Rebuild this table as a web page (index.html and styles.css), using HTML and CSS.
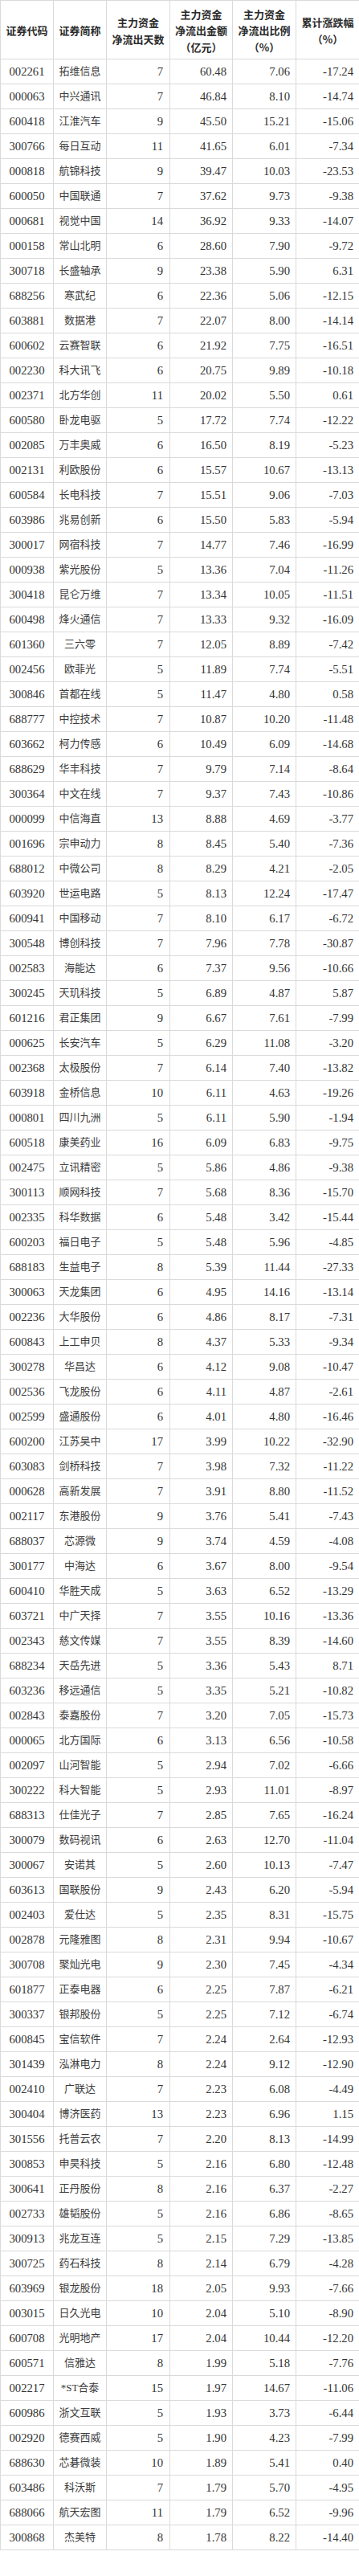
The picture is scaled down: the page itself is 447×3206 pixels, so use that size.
FILE: index.html
```html
<!DOCTYPE html>
<html lang="zh-CN">
<head>
<meta charset="utf-8">
<title>主力资金净流出</title>
<link rel="stylesheet" href="styles.css">
</head>
<body>
<table class="tbl">
<colgroup>
<col class="c1"><col class="c2"><col class="c3"><col class="c4"><col class="c5"><col class="c6">
</colgroup>
<thead>
<tr>
<th>证券代码</th>
<th>证券简称</th>
<th>主力资金<br>净流出天数</th>
<th>主力资金<br>净流出金额<br>（亿元）</th>
<th>主力资金<br>净流出比例<br>（%）</th>
<th>累计涨跌幅<br>（%）</th>
</tr>
</thead>
<tbody>
<tr><td class="code">002261</td><td class="name">拓维信息</td><td class="num n3">7</td><td class="num">60.48</td><td class="num">7.06</td><td class="num">-17.24</td></tr>
<tr><td class="code">000063</td><td class="name">中兴通讯</td><td class="num n3">7</td><td class="num">46.84</td><td class="num">8.10</td><td class="num">-14.74</td></tr>
<tr><td class="code">600418</td><td class="name">江淮汽车</td><td class="num n3">9</td><td class="num">45.50</td><td class="num">15.21</td><td class="num">-15.06</td></tr>
<tr><td class="code">300766</td><td class="name">每日互动</td><td class="num n3">11</td><td class="num">41.65</td><td class="num">6.01</td><td class="num">-7.34</td></tr>
<tr><td class="code">000818</td><td class="name">航锦科技</td><td class="num n3">9</td><td class="num">39.47</td><td class="num">10.03</td><td class="num">-23.53</td></tr>
<tr><td class="code">600050</td><td class="name">中国联通</td><td class="num n3">7</td><td class="num">37.62</td><td class="num">9.73</td><td class="num">-9.38</td></tr>
<tr><td class="code">000681</td><td class="name">视觉中国</td><td class="num n3">14</td><td class="num">36.92</td><td class="num">9.33</td><td class="num">-14.07</td></tr>
<tr><td class="code">000158</td><td class="name">常山北明</td><td class="num n3">6</td><td class="num">28.60</td><td class="num">7.90</td><td class="num">-9.72</td></tr>
<tr><td class="code">300718</td><td class="name">长盛轴承</td><td class="num n3">9</td><td class="num">23.38</td><td class="num">5.90</td><td class="num">6.31</td></tr>
<tr><td class="code">688256</td><td class="name">寒武纪</td><td class="num n3">6</td><td class="num">22.36</td><td class="num">5.06</td><td class="num">-12.15</td></tr>
<tr><td class="code">603881</td><td class="name">数据港</td><td class="num n3">7</td><td class="num">22.07</td><td class="num">8.00</td><td class="num">-14.14</td></tr>
<tr><td class="code">600602</td><td class="name">云赛智联</td><td class="num n3">6</td><td class="num">21.92</td><td class="num">7.75</td><td class="num">-16.51</td></tr>
<tr><td class="code">002230</td><td class="name">科大讯飞</td><td class="num n3">6</td><td class="num">20.75</td><td class="num">9.89</td><td class="num">-10.18</td></tr>
<tr><td class="code">002371</td><td class="name">北方华创</td><td class="num n3">11</td><td class="num">20.02</td><td class="num">5.50</td><td class="num">0.61</td></tr>
<tr><td class="code">600580</td><td class="name">卧龙电驱</td><td class="num n3">5</td><td class="num">17.72</td><td class="num">7.74</td><td class="num">-12.22</td></tr>
<tr><td class="code">002085</td><td class="name">万丰奥威</td><td class="num n3">6</td><td class="num">16.50</td><td class="num">8.19</td><td class="num">-5.23</td></tr>
<tr><td class="code">002131</td><td class="name">利欧股份</td><td class="num n3">6</td><td class="num">15.57</td><td class="num">10.67</td><td class="num">-13.13</td></tr>
<tr><td class="code">600584</td><td class="name">长电科技</td><td class="num n3">7</td><td class="num">15.51</td><td class="num">9.06</td><td class="num">-7.03</td></tr>
<tr><td class="code">603986</td><td class="name">兆易创新</td><td class="num n3">6</td><td class="num">15.50</td><td class="num">5.83</td><td class="num">-5.94</td></tr>
<tr><td class="code">300017</td><td class="name">网宿科技</td><td class="num n3">7</td><td class="num">14.77</td><td class="num">7.46</td><td class="num">-16.99</td></tr>
<tr><td class="code">000938</td><td class="name">紫光股份</td><td class="num n3">5</td><td class="num">13.36</td><td class="num">7.04</td><td class="num">-11.26</td></tr>
<tr><td class="code">300418</td><td class="name">昆仑万维</td><td class="num n3">7</td><td class="num">13.34</td><td class="num">10.05</td><td class="num">-11.51</td></tr>
<tr><td class="code">600498</td><td class="name">烽火通信</td><td class="num n3">7</td><td class="num">13.33</td><td class="num">9.32</td><td class="num">-16.09</td></tr>
<tr><td class="code">601360</td><td class="name">三六零</td><td class="num n3">7</td><td class="num">12.05</td><td class="num">8.89</td><td class="num">-7.42</td></tr>
<tr><td class="code">002456</td><td class="name">欧菲光</td><td class="num n3">5</td><td class="num">11.89</td><td class="num">7.74</td><td class="num">-5.51</td></tr>
<tr><td class="code">300846</td><td class="name">首都在线</td><td class="num n3">5</td><td class="num">11.47</td><td class="num">4.80</td><td class="num">0.58</td></tr>
<tr><td class="code">688777</td><td class="name">中控技术</td><td class="num n3">7</td><td class="num">10.87</td><td class="num">10.20</td><td class="num">-11.48</td></tr>
<tr><td class="code">603662</td><td class="name">柯力传感</td><td class="num n3">6</td><td class="num">10.49</td><td class="num">6.09</td><td class="num">-14.68</td></tr>
<tr><td class="code">688629</td><td class="name">华丰科技</td><td class="num n3">7</td><td class="num">9.79</td><td class="num">7.14</td><td class="num">-8.64</td></tr>
<tr><td class="code">300364</td><td class="name">中文在线</td><td class="num n3">7</td><td class="num">9.37</td><td class="num">7.43</td><td class="num">-10.86</td></tr>
<tr><td class="code">000099</td><td class="name">中信海直</td><td class="num n3">13</td><td class="num">8.88</td><td class="num">4.69</td><td class="num">-3.77</td></tr>
<tr><td class="code">001696</td><td class="name">宗申动力</td><td class="num n3">8</td><td class="num">8.45</td><td class="num">5.40</td><td class="num">-7.36</td></tr>
<tr><td class="code">688012</td><td class="name">中微公司</td><td class="num n3">8</td><td class="num">8.29</td><td class="num">4.21</td><td class="num">-2.05</td></tr>
<tr><td class="code">603920</td><td class="name">世运电路</td><td class="num n3">5</td><td class="num">8.13</td><td class="num">12.24</td><td class="num">-17.47</td></tr>
<tr><td class="code">600941</td><td class="name">中国移动</td><td class="num n3">7</td><td class="num">8.10</td><td class="num">6.17</td><td class="num">-6.72</td></tr>
<tr><td class="code">300548</td><td class="name">博创科技</td><td class="num n3">7</td><td class="num">7.96</td><td class="num">7.78</td><td class="num">-30.87</td></tr>
<tr><td class="code">002583</td><td class="name">海能达</td><td class="num n3">6</td><td class="num">7.37</td><td class="num">9.56</td><td class="num">-10.66</td></tr>
<tr><td class="code">300245</td><td class="name">天玑科技</td><td class="num n3">5</td><td class="num">6.89</td><td class="num">4.87</td><td class="num">5.87</td></tr>
<tr><td class="code">601216</td><td class="name">君正集团</td><td class="num n3">9</td><td class="num">6.67</td><td class="num">7.61</td><td class="num">-7.99</td></tr>
<tr><td class="code">000625</td><td class="name">长安汽车</td><td class="num n3">5</td><td class="num">6.29</td><td class="num">11.08</td><td class="num">-3.20</td></tr>
<tr><td class="code">002368</td><td class="name">太极股份</td><td class="num n3">7</td><td class="num">6.14</td><td class="num">7.40</td><td class="num">-13.82</td></tr>
<tr><td class="code">603918</td><td class="name">金桥信息</td><td class="num n3">10</td><td class="num">6.11</td><td class="num">4.63</td><td class="num">-19.26</td></tr>
<tr><td class="code">000801</td><td class="name">四川九洲</td><td class="num n3">5</td><td class="num">6.11</td><td class="num">5.90</td><td class="num">-1.94</td></tr>
<tr><td class="code">600518</td><td class="name">康美药业</td><td class="num n3">16</td><td class="num">6.09</td><td class="num">6.83</td><td class="num">-9.75</td></tr>
<tr><td class="code">002475</td><td class="name">立讯精密</td><td class="num n3">5</td><td class="num">5.86</td><td class="num">4.86</td><td class="num">-9.38</td></tr>
<tr><td class="code">300113</td><td class="name">顺网科技</td><td class="num n3">7</td><td class="num">5.68</td><td class="num">8.36</td><td class="num">-15.70</td></tr>
<tr><td class="code">002335</td><td class="name">科华数据</td><td class="num n3">6</td><td class="num">5.48</td><td class="num">3.42</td><td class="num">-15.44</td></tr>
<tr><td class="code">600203</td><td class="name">福日电子</td><td class="num n3">5</td><td class="num">5.48</td><td class="num">5.96</td><td class="num">-4.85</td></tr>
<tr><td class="code">688183</td><td class="name">生益电子</td><td class="num n3">8</td><td class="num">5.39</td><td class="num">11.44</td><td class="num">-27.33</td></tr>
<tr><td class="code">300063</td><td class="name">天龙集团</td><td class="num n3">6</td><td class="num">4.95</td><td class="num">14.16</td><td class="num">-13.14</td></tr>
<tr><td class="code">002236</td><td class="name">大华股份</td><td class="num n3">6</td><td class="num">4.86</td><td class="num">8.17</td><td class="num">-7.31</td></tr>
<tr><td class="code">600843</td><td class="name">上工申贝</td><td class="num n3">8</td><td class="num">4.37</td><td class="num">5.33</td><td class="num">-9.34</td></tr>
<tr><td class="code">300278</td><td class="name">华昌达</td><td class="num n3">6</td><td class="num">4.12</td><td class="num">9.08</td><td class="num">-10.47</td></tr>
<tr><td class="code">002536</td><td class="name">飞龙股份</td><td class="num n3">6</td><td class="num">4.11</td><td class="num">4.87</td><td class="num">-2.61</td></tr>
<tr><td class="code">002599</td><td class="name">盛通股份</td><td class="num n3">6</td><td class="num">4.01</td><td class="num">4.80</td><td class="num">-16.46</td></tr>
<tr><td class="code">600200</td><td class="name">江苏吴中</td><td class="num n3">17</td><td class="num">3.99</td><td class="num">10.22</td><td class="num">-32.90</td></tr>
<tr><td class="code">603083</td><td class="name">剑桥科技</td><td class="num n3">7</td><td class="num">3.98</td><td class="num">7.32</td><td class="num">-11.22</td></tr>
<tr><td class="code">000628</td><td class="name">高新发展</td><td class="num n3">7</td><td class="num">3.91</td><td class="num">8.80</td><td class="num">-11.52</td></tr>
<tr><td class="code">002117</td><td class="name">东港股份</td><td class="num n3">9</td><td class="num">3.76</td><td class="num">5.41</td><td class="num">-7.43</td></tr>
<tr><td class="code">688037</td><td class="name">芯源微</td><td class="num n3">9</td><td class="num">3.74</td><td class="num">4.59</td><td class="num">-4.08</td></tr>
<tr><td class="code">300177</td><td class="name">中海达</td><td class="num n3">6</td><td class="num">3.67</td><td class="num">8.00</td><td class="num">-9.54</td></tr>
<tr><td class="code">600410</td><td class="name">华胜天成</td><td class="num n3">5</td><td class="num">3.63</td><td class="num">6.52</td><td class="num">-13.29</td></tr>
<tr><td class="code">603721</td><td class="name">中广天择</td><td class="num n3">7</td><td class="num">3.55</td><td class="num">10.16</td><td class="num">-13.36</td></tr>
<tr><td class="code">002343</td><td class="name">慈文传媒</td><td class="num n3">7</td><td class="num">3.55</td><td class="num">8.39</td><td class="num">-14.60</td></tr>
<tr><td class="code">688234</td><td class="name">天岳先进</td><td class="num n3">5</td><td class="num">3.36</td><td class="num">5.43</td><td class="num">8.71</td></tr>
<tr><td class="code">603236</td><td class="name">移远通信</td><td class="num n3">5</td><td class="num">3.35</td><td class="num">5.21</td><td class="num">-10.82</td></tr>
<tr><td class="code">002843</td><td class="name">泰嘉股份</td><td class="num n3">7</td><td class="num">3.20</td><td class="num">7.05</td><td class="num">-15.73</td></tr>
<tr><td class="code">000065</td><td class="name">北方国际</td><td class="num n3">6</td><td class="num">3.13</td><td class="num">6.56</td><td class="num">-10.58</td></tr>
<tr><td class="code">002097</td><td class="name">山河智能</td><td class="num n3">5</td><td class="num">2.94</td><td class="num">7.02</td><td class="num">-6.66</td></tr>
<tr><td class="code">300222</td><td class="name">科大智能</td><td class="num n3">5</td><td class="num">2.93</td><td class="num">11.01</td><td class="num">-8.97</td></tr>
<tr><td class="code">688313</td><td class="name">仕佳光子</td><td class="num n3">7</td><td class="num">2.85</td><td class="num">7.65</td><td class="num">-16.24</td></tr>
<tr><td class="code">300079</td><td class="name">数码视讯</td><td class="num n3">6</td><td class="num">2.63</td><td class="num">12.70</td><td class="num">-11.04</td></tr>
<tr><td class="code">300067</td><td class="name">安诺其</td><td class="num n3">5</td><td class="num">2.60</td><td class="num">10.13</td><td class="num">-7.47</td></tr>
<tr><td class="code">603613</td><td class="name">国联股份</td><td class="num n3">9</td><td class="num">2.43</td><td class="num">6.20</td><td class="num">-5.94</td></tr>
<tr><td class="code">002403</td><td class="name">爱仕达</td><td class="num n3">5</td><td class="num">2.35</td><td class="num">8.31</td><td class="num">-15.75</td></tr>
<tr><td class="code">002878</td><td class="name">元隆雅图</td><td class="num n3">8</td><td class="num">2.31</td><td class="num">9.94</td><td class="num">-10.67</td></tr>
<tr><td class="code">300708</td><td class="name">聚灿光电</td><td class="num n3">9</td><td class="num">2.30</td><td class="num">7.45</td><td class="num">-4.34</td></tr>
<tr><td class="code">601877</td><td class="name">正泰电器</td><td class="num n3">6</td><td class="num">2.25</td><td class="num">7.87</td><td class="num">-6.21</td></tr>
<tr><td class="code">300337</td><td class="name">银邦股份</td><td class="num n3">5</td><td class="num">2.25</td><td class="num">7.12</td><td class="num">-6.74</td></tr>
<tr><td class="code">600845</td><td class="name">宝信软件</td><td class="num n3">7</td><td class="num">2.24</td><td class="num">2.64</td><td class="num">-12.93</td></tr>
<tr><td class="code">301439</td><td class="name">泓淋电力</td><td class="num n3">8</td><td class="num">2.24</td><td class="num">9.12</td><td class="num">-12.90</td></tr>
<tr><td class="code">002410</td><td class="name">广联达</td><td class="num n3">7</td><td class="num">2.23</td><td class="num">6.08</td><td class="num">-4.49</td></tr>
<tr><td class="code">300404</td><td class="name">博济医药</td><td class="num n3">13</td><td class="num">2.23</td><td class="num">6.96</td><td class="num">1.15</td></tr>
<tr><td class="code">301556</td><td class="name">托普云农</td><td class="num n3">7</td><td class="num">2.20</td><td class="num">8.13</td><td class="num">-14.99</td></tr>
<tr><td class="code">300853</td><td class="name">申昊科技</td><td class="num n3">5</td><td class="num">2.16</td><td class="num">6.80</td><td class="num">-12.48</td></tr>
<tr><td class="code">300641</td><td class="name">正丹股份</td><td class="num n3">8</td><td class="num">2.16</td><td class="num">6.37</td><td class="num">-2.27</td></tr>
<tr><td class="code">002733</td><td class="name">雄韬股份</td><td class="num n3">5</td><td class="num">2.16</td><td class="num">6.86</td><td class="num">-8.65</td></tr>
<tr><td class="code">300913</td><td class="name">兆龙互连</td><td class="num n3">5</td><td class="num">2.15</td><td class="num">7.29</td><td class="num">-13.85</td></tr>
<tr><td class="code">300725</td><td class="name">药石科技</td><td class="num n3">8</td><td class="num">2.14</td><td class="num">6.79</td><td class="num">-4.28</td></tr>
<tr><td class="code">603969</td><td class="name">银龙股份</td><td class="num n3">18</td><td class="num">2.05</td><td class="num">9.93</td><td class="num">-7.66</td></tr>
<tr><td class="code">003015</td><td class="name">日久光电</td><td class="num n3">10</td><td class="num">2.04</td><td class="num">5.10</td><td class="num">-8.90</td></tr>
<tr><td class="code">600708</td><td class="name">光明地产</td><td class="num n3">17</td><td class="num">2.04</td><td class="num">10.44</td><td class="num">-12.20</td></tr>
<tr><td class="code">600571</td><td class="name">信雅达</td><td class="num n3">8</td><td class="num">1.99</td><td class="num">5.18</td><td class="num">-7.76</td></tr>
<tr><td class="code">002217</td><td class="name">*ST合泰</td><td class="num n3">15</td><td class="num">1.97</td><td class="num">14.67</td><td class="num">-11.06</td></tr>
<tr><td class="code">600986</td><td class="name">浙文互联</td><td class="num n3">5</td><td class="num">1.93</td><td class="num">3.73</td><td class="num">-6.44</td></tr>
<tr><td class="code">002920</td><td class="name">德赛西威</td><td class="num n3">5</td><td class="num">1.90</td><td class="num">4.23</td><td class="num">-7.99</td></tr>
<tr><td class="code">688630</td><td class="name">芯碁微装</td><td class="num n3">10</td><td class="num">1.89</td><td class="num">5.41</td><td class="num">0.40</td></tr>
<tr><td class="code">603486</td><td class="name">科沃斯</td><td class="num n3">7</td><td class="num">1.79</td><td class="num">5.70</td><td class="num">-4.95</td></tr>
<tr><td class="code">688066</td><td class="name">航天宏图</td><td class="num n3">11</td><td class="num">1.79</td><td class="num">6.52</td><td class="num">-9.96</td></tr>
<tr><td class="code">300868</td><td class="name">杰美特</td><td class="num n3">8</td><td class="num">1.78</td><td class="num">8.22</td><td class="num">-14.40</td></tr>
</tbody>
</table>
</body>
</html>
```

FILE: styles.css
```css
html, body {
  margin: 0;
  padding: 0;
  background: #ffffff;
}

.tbl {
  width: 447px;
  border-collapse: collapse;
  table-layout: fixed;
  font-family: "Liberation Serif", "Noto Sans CJK SC", serif;
  font-size: 14.7px;
  color: #333333;
}

.c1 { width: 66px; }
.c2 { width: 66px; }
.c3 { width: 79px; }
.c4 { width: 78px; }
.c5 { width: 79px; }
.c6 { width: 79px; }

.tbl th,
.tbl td {
  border: 1px solid #dadada;
  padding: 0;
  vertical-align: middle;
  white-space: nowrap;
  overflow: hidden;
}

.tbl thead tr {
  height: 73px;
}

.tbl th {
  font-family: "Noto Sans CJK SC", sans-serif;
  font-size: 13px;
  font-weight: 700;
  line-height: 20.5px;
  color: #2a2a2a;
  text-align: center;
  padding-top: 3px;
}

.tbl tbody tr {
  height: 31px;
}

.tbl td {
  line-height: 20px;
}

.code {
  text-align: center;
}

.name {
  text-align: center;
  font-size: 13px;
  color: #3c3c3c;
}

.num {
  text-align: right;
  padding-right: 7px !important;
}

.n3 {
  padding-right: 8px !important;
}
```
